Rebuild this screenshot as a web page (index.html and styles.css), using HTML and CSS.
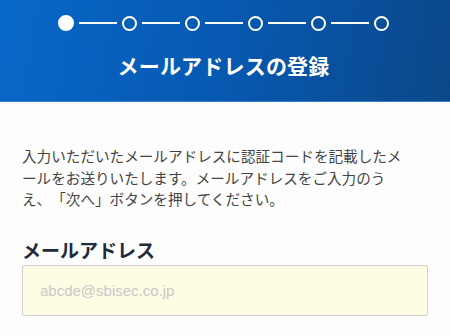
FILE: index.html
```html
<!DOCTYPE html>
<html lang="ja">
<head>
<meta charset="utf-8">
<link rel="stylesheet" href="styles.css">
</head>
<body>
<header class="hero">
  <div class="steps">
    <span class="dot dot-active"></span>
    <span class="bar"></span>
    <span class="dot"></span>
    <span class="bar"></span>
    <span class="dot"></span>
    <span class="bar"></span>
    <span class="dot"></span>
    <span class="bar"></span>
    <span class="dot"></span>
    <span class="bar"></span>
    <span class="dot"></span>
  </div>
  <h1 class="title">メールアドレスの登録</h1>
</header>
<main class="content">
  <p class="lead">入力いただいたメールアドレスに認証コードを記載したメールをお送りいたします。メールアドレスをご入力のうえ、「次へ」ボタンを押してください。</p>
  <label class="label" for="mail">メールアドレス</label>
  <input class="field" id="mail" type="text" placeholder="abcde@sbisec.co.jp">
</main>
</body>
</html>
```

FILE: styles.css
```css
html, body {
  margin: 0;
  padding: 0;
  background: #fdfdfd;
  font-family: "Noto Sans CJK JP", "Noto Sans", sans-serif;
}

.hero {
  height: 102px;
  box-sizing: border-box;
  background: linear-gradient(100deg, #0868c8 0%, #0757ae 55%, #0b4889 100%);
  display: flex;
  flex-direction: column;
  align-items: center;
  padding-top: 15px;
  padding-right: 3px;
  border-bottom: 1px solid #3a7fcf;
}

.steps {
  display: flex;
  align-items: center;
  gap: 5px;
  height: 16px;
}

.dot {
  width: 15px;
  height: 15px;
  box-sizing: border-box;
  border: 2px solid #ffffff;
  border-radius: 50%;
}

.dot-active {
  width: 16px;
  height: 16px;
  background: #ffffff;
}

.bar {
  width: 38px;
  height: 2px;
  background: #ffffff;
}

.title {
  margin: 20px 0 0;
  color: #ffffff;
  font-size: 21px;
  font-weight: 700;
  line-height: 28px;
  letter-spacing: 0.2px;
}

.content {
  padding: 0 22px;
}

.lead {
  margin: 43px 0 0;
  width: 390px;
  font-size: 14.6px;
  line-height: 21.5px;
  color: #444444;
  text-spacing-trim: space-all;
}

.label {
  display: block;
  margin-top: 28px;
  font-size: 19px;
  font-weight: 700;
  line-height: 24px;
  color: #1d2b3b;
}

.field {
  display: block;
  margin-top: 3px;
  width: 406px;
  height: 51px;
  box-sizing: border-box;
  padding: 0 17px;
  background: #fefce2;
  border: 1px solid #cfcfcf;
  border-radius: 2px;
  font-family: "Liberation Sans", Arial, sans-serif;
  font-size: 15px;
  color: #333333;
  outline: none;
}

.field::placeholder {
  color: #c8c8c8;
}
```
